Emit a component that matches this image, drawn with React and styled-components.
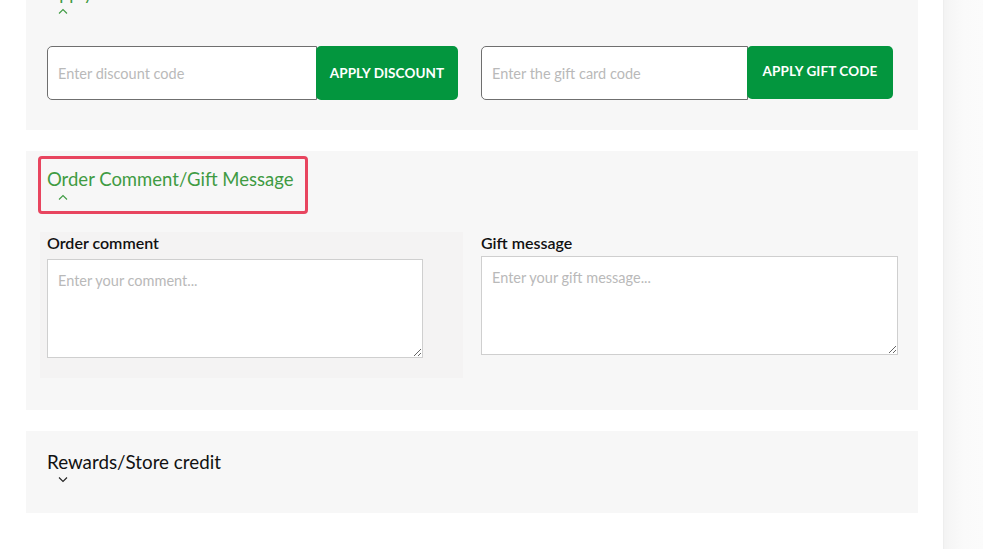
import React from "react";
import styled, { createGlobalStyle } from "styled-components";

const Global = createGlobalStyle`
  html, body { margin: 0; padding: 0; background: #ffffff; }
  body { font-family: Lato, "Open Sans", sans-serif; overflow: hidden; }
  * { box-sizing: border-box; }
`;

const Page = styled.div`
  display: flex;
  width: 983px;
  height: 549px;
  overflow: hidden;
`;

const Main = styled.div`
  width: 943px;
  padding-left: 26px;
  padding-right: 25px;
  display: flex;
  flex-direction: column;
  gap: 21px;
`;

const SideStrip = styled.div`
  flex: 1;
  background: linear-gradient(90deg, #f3f3f3 0px, #f6f6f6 6px, #fafafa 20px, #fbfbfb 100%);
  border-left: 1px solid #eeeeee;
`;

const Panel = styled.section`
  display: flex;
  flex-direction: column;
  background: #f7f7f7;
  padding: ${(p) => p.$pad};
  margin-top: ${(p) => p.$mt || "0"};
`;

const Title = styled.div`
  color: ${(p) => (p.$green ? "#3f9b43" : "#111")};
  font-size: ${(p) => p.$size || "18px"};
  line-height: 22px;
  letter-spacing: ${(p) => p.$ls || "0"};
`;

const TitleBox = styled.div`
  display: inline-flex;
  flex-direction: column;
  align-self: flex-start;
  border: 3px solid #e8455f;
  border-radius: 4px;
  padding: 9px 12px 7px 6px;
  margin: 5px 0 0 -9px;
`;

const Chevron = ({ up, color }) => (
  <ChevronWrap>
    <svg width="10" height="6" viewBox="0 0 10 6">
      <polyline
        points={up ? "1,5.5 5,1.5 9,5.5" : "1,0.5 5,4.5 9,0.5"}
        fill="none"
        stroke={color}
        strokeWidth="1.1"
      />
    </svg>
  </ChevronWrap>
);

const ChevronWrap = styled.div`
  display: flex;
  padding-left: 11px;
  height: 14px;
  align-items: center;
`;

const CodeRow = styled.div`
  display: grid;
  grid-template-columns: 411px 412px;
  gap: 23px;
  margin-top: 28px;
`;

const CodeGroup = styled.div`
  display: flex;
  height: 54px;
`;

const CodeInput = styled.input`
  flex: 1;
  min-width: 0;
  height: 100%;
  border: 1px solid #6f6f6f;
  border-radius: 5px 0 0 5px;
  background: #fff;
  padding: 0 10px;
  font-family: inherit;
  font-size: 14.5px;
  outline: none;
  &::placeholder { color: #b9b9b9; }
`;

const ApplyButton = styled.button`
  width: ${(p) => p.$w};
  height: ${(p) => p.$h || "54px"};
  margin-left: -1px;
  border: none;
  border-radius: 5px;
  background: #03963e;
  color: #fff;
  font-family: inherit;
  font-weight: 700;
  font-size: 13.5px;
  letter-spacing: 0.1px;
  padding: 0;
  padding-bottom: ${(p) => p.$pb || "0"};
`;

const FormGrid = styled.div`
  display: grid;
  grid-template-columns: 423px 417px;
  gap: 18px;
  margin: 18px 0 0 -7px;
`;

const FieldBlock = styled.div`
  display: flex;
  flex-direction: column;
  background: ${(p) => (p.$shade ? "#f4f3f3" : "transparent")};
  padding: ${(p) => p.$pad};
`;

const Label = styled.label`
  font-size: 16px;
  font-weight: 600;
  color: #111;
  line-height: 18px;
  margin-bottom: ${(p) => p.$mb};
`;

const TextArea = styled.textarea`
  width: ${(p) => p.$w};
  height: 99px;
  border: 1px solid #cfcfcf;
  background: #fff;
  padding: 12px 10px;
  font-family: inherit;
  font-size: 14.5px;
  resize: both;
  outline: none;
  &::placeholder { color: #b9b9b9; }
`;

export default function App() {
  return (
    <Page>
      <Global />
      <Main>
        <Panel $pad="0 21px 30px" $mt="-18px">
          <Title $green>Apply Discount Code</Title>
          <Chevron up color="#3f9b43" />
          <CodeRow>
            <CodeGroup>
              <CodeInput placeholder="Enter discount code" />
              <ApplyButton $w="142px">APPLY DISCOUNT</ApplyButton>
            </CodeGroup>
            <CodeGroup>
              <CodeInput placeholder="Enter the gift card code" />
              <ApplyButton $w="146px" $h="53px" $pb="3px">APPLY GIFT CODE</ApplyButton>
            </CodeGroup>
          </CodeRow>
        </Panel>

        <Panel $pad="0 21px 32px">
          <TitleBox>
            <Title $green $size="18.5px">Order Comment/Gift Message</Title>
            <Chevron up color="#3f9b43" />
          </TitleBox>
          <FormGrid>
            <FieldBlock $shade $pad="2px 7px 20px">
              <Label $mb="7px">Order comment</Label>
              <TextArea $w="376px" placeholder="Enter your comment..." />
            </FieldBlock>
            <FieldBlock $pad="2px 0 0">
              <Label $mb="4px">Gift message</Label>
              <TextArea $w="417px" placeholder="Enter your gift message..." />
            </FieldBlock>
          </FormGrid>
        </Panel>

        <Panel $pad="20px 21px 26px">
          <Title $size="18.8px">Rewards/Store credit</Title>
          <Chevron color="#222" />
        </Panel>
      </Main>
      <SideStrip />
    </Page>
  );
}
